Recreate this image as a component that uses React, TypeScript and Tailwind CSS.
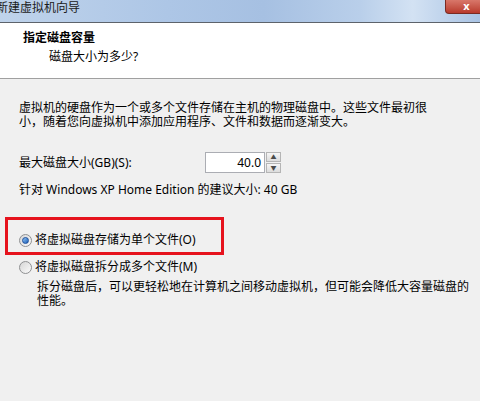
const font = { fontFamily: '"Noto Sans", "Noto Sans CJK SC", sans-serif' };

const Radio = ({ checked }: { checked?: boolean }) => (
  <span className="flex h-[13px] w-[13px] shrink-0 items-center justify-center rounded-full border border-[#8f9092] bg-gradient-to-br from-[#d6d6d6] to-[#fbfbfb]">
    {checked && (
      <span className="h-[7px] w-[7px] rounded-full border border-[#1d4f9c] bg-gradient-to-br from-[#8fc3f3] to-[#1a60b8]" />
    )}
  </span>
);

export default function App() {
  return (
    <div
      className="flex h-[401px] w-[480px] flex-col overflow-hidden whitespace-nowrap bg-[#f0f0f0] text-[12px] leading-[14px] text-black"
      style={font}
    >
      {/* title bar */}
      <div className="flex h-[23px] shrink-0 justify-between border-b border-[#5d636b] bg-[linear-gradient(to_right,#bfd3eb_0%,#adc6e6_35%,#a6c0e2_55%,#b9cfea_75%,#d3e2f3_86%,#a9c3e4_100%)]">
        <div className="-ml-[4px] pt-[1px] text-[#1b1b1b]">新建虚拟机向导</div>
        <div className="-mr-[8px] flex h-[14px] w-[43px] items-start justify-center rounded-bl-[4px] border border-t-0 border-[#7a2a22] bg-gradient-to-b from-[#d8776a] to-[#b8392c] text-[11px] leading-[11px] font-bold text-white">
          x
        </div>
      </div>

      {/* header */}
      <div className="h-[56px] shrink-0 border-b border-[#a0a0a0] bg-white pt-[8px]">
        <div className="pl-[23px] font-bold">指定磁盘容量</div>
        <div className="mt-[5px] pl-[49px]">磁盘大小为多少?</div>
      </div>

      {/* body */}
      <div className="flex flex-col px-[19px] pt-[22px]">
        <div>
          <div>虚拟机的硬盘作为一个或多个文件存储在主机的物理磁盘中。这些文件最初很</div>
          <div>小，随着您向虚拟机中添加应用程序、文件和数据而逐渐变大。</div>
        </div>

        <div className="mt-[23px] flex h-[21px] items-center">
          <span className="w-[186px]">最大磁盘大小(GB)(S):</span>
          <div className="flex h-[21px]">
            <div className="flex w-[60px] items-center justify-end border border-[#abadb3] bg-white pr-[3px]">
              40.0
            </div>
            <div className="ml-[1px] flex w-[15px] flex-col">
              <div className="flex h-[10px] items-center justify-center border border-[#b5b5b5] bg-gradient-to-b from-[#f6f6f6] to-[#dcdcdc] text-[6px] leading-none text-[#4a4a4a]">
                ▲
              </div>
              <div className="mt-[1px] flex h-[10px] items-center justify-center border border-[#b5b5b5] bg-gradient-to-b from-[#f6f6f6] to-[#dcdcdc] text-[6px] leading-none text-[#4a4a4a]">
                ▼
              </div>
            </div>
          </div>
        </div>

        <div className="mt-[10px]">针对 Windows XP Home Edition 的建议大小: 40 GB</div>

        <div className="relative mt-[36px] flex items-center gap-[3px]">
          <Radio checked />
          <span>将虚拟磁盘存储为单个文件(O)</span>
          <div className="pointer-events-none absolute -left-[14px] -top-[16px] h-[38px] w-[219px] border-[3px] border-[#e6131d]" />
        </div>

        <div className="mt-[13px] flex items-center gap-[3px]">
          <Radio />
          <span>将虚拟磁盘拆分成多个文件(M)</span>
        </div>

        <div className="mt-[6px] pl-[18px]">
          <div>拆分磁盘后，可以更轻松地在计算机之间移动虚拟机，但可能会降低大容量磁盘的</div>
          <div>性能。</div>
        </div>
      </div>
    </div>
  );
}
